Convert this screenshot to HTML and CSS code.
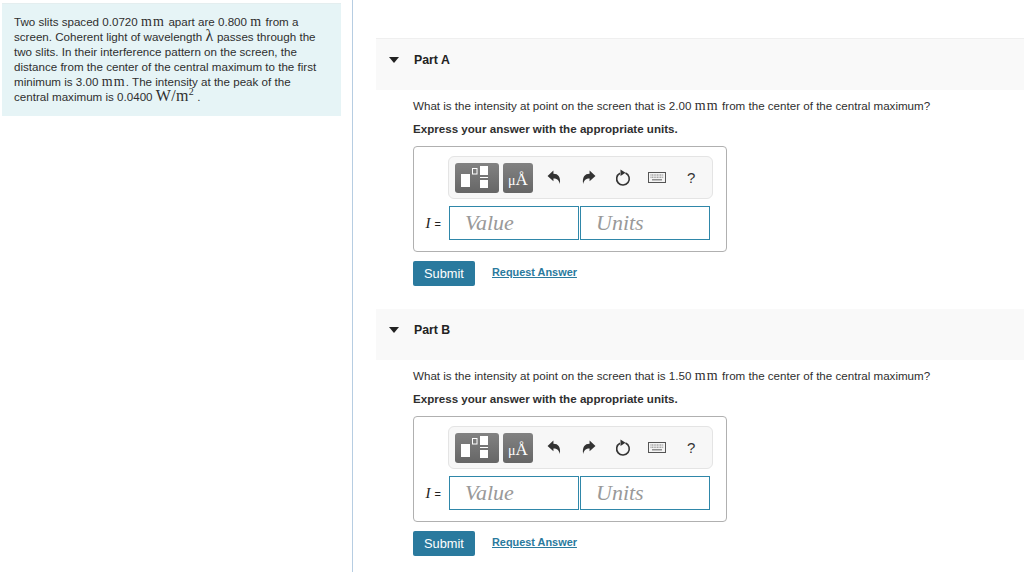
FILE: index.html
```html
<!DOCTYPE html>
<html lang="en">
<head>
<meta charset="utf-8">
<title>Interference</title>
<link rel="stylesheet" href="styles.css">
</head>
<body>
<div class="page">
  <aside class="sidebar">
    <div class="problem">
      <p>Two slits spaced 0.0720 <span class="m">mm</span> apart are 0.800 <span class="m">m</span> from a<br>screen. Coherent light of wavelength <span class="m lam">λ</span> passes through the<br>two slits. In their interference pattern on the screen, the<br>distance from the center of the central maximum to the first<br>minimum is 3.00 <span class="m">mm</span>. The intensity at the peak of the<br>central maximum is 0.0400 <span class="m big">W/m<sup>2</sup></span> .</p>
    </div>
  </aside>
  <main class="main">
    <section class="part">
      <header class="part-head"><span class="caret"></span><h2>Part A</h2></header>
      <div class="part-body">
        <p class="question">What is the intensity at point on the screen that is 2.00 <span class="m">mm</span> from the center of the central maximum?</p>
        <p class="instruction">Express your answer with the appropriate units.</p>
        <div class="answer">
          <div class="toolbar">
            <span class="tbtn tmpl"><svg width="44" height="30" viewBox="0 0 44 30"><rect x="6" y="11" width="9" height="13" fill="#fff"/><rect x="17.500" y="5.500" width="4.500" height="5.500" fill="none" stroke="#fff"/><rect x="25" y="3" width="8" height="9" fill="#fff"/><rect x="25" y="14" width="8" height="1" fill="#fff"/><rect x="25" y="17" width="8" height="8" fill="#fff"/></svg></span>
            <span class="tbtn unit"><span class="mu">μ</span><span class="ang">Å</span></span>
            <span class="ticon i1"><svg width="15" height="15" viewBox="0 0 14 14"><path d="M0.500 5.500 6 0.500V3.500C10.500 3.500 13 6.500 12 13 11 9.500 9.500 8 6 8V10.500Z" fill="#333"/></svg></span>
            <span class="ticon i2"><svg width="15" height="15" viewBox="0 0 14 14"><path d="M13.500 5.500 8 0.500V3.500C3.500 3.500 1 6.500 2 13 3 9.500 4.500 8 8 8V10.500Z" fill="#333"/></svg></span>
            <span class="ticon i3"><svg width="16" height="18" viewBox="0 0 16 18"><path d="M5 4.200A6.300 6.300 0 1 0 10.500 4" fill="none" stroke="#333" stroke-width="1.600"/><path d="M5.500 0.500 10.500 3.800 5.500 7Z" fill="#333"/></svg></span>
            <span class="ticon i4"><svg width="18" height="11" viewBox="0 0 18 11"><rect x="0.500" y="0.500" width="17" height="10" fill="#f4f4f4" stroke="#555"/><path d="M2.500 3H15.500M2.500 5.200H15.500" stroke="#777" stroke-dasharray="1 .6"/><path d="M4 7.800H14" stroke="#777" stroke-width="1.200"/></svg></span>
            <span class="ticon i5">?</span>
          </div>
          <div class="inputs">
            <span class="var"><i>I</i><span class="eq">=</span></span>
            <span class="field">Value</span>
            <span class="field">Units</span>
          </div>
        </div>
        <div class="actions">
          <button class="submit" type="button">Submit</button>
          <a class="request" href="#">Request Answer</a>
        </div>
      </div>
    </section>
    <section class="part">
      <header class="part-head"><span class="caret"></span><h2>Part B</h2></header>
      <div class="part-body">
        <p class="question">What is the intensity at point on the screen that is 1.50 <span class="m">mm</span> from the center of the central maximum?</p>
        <p class="instruction">Express your answer with the appropriate units.</p>
        <div class="answer">
          <div class="toolbar">
            <span class="tbtn tmpl"><svg width="44" height="30" viewBox="0 0 44 30"><rect x="6" y="11" width="9" height="13" fill="#fff"/><rect x="17.500" y="5.500" width="4.500" height="5.500" fill="none" stroke="#fff"/><rect x="25" y="3" width="8" height="9" fill="#fff"/><rect x="25" y="14" width="8" height="1" fill="#fff"/><rect x="25" y="17" width="8" height="8" fill="#fff"/></svg></span>
            <span class="tbtn unit"><span class="mu">μ</span><span class="ang">Å</span></span>
            <span class="ticon i1"><svg width="15" height="15" viewBox="0 0 14 14"><path d="M0.500 5.500 6 0.500V3.500C10.500 3.500 13 6.500 12 13 11 9.500 9.500 8 6 8V10.500Z" fill="#333"/></svg></span>
            <span class="ticon i2"><svg width="15" height="15" viewBox="0 0 14 14"><path d="M13.500 5.500 8 0.500V3.500C3.500 3.500 1 6.500 2 13 3 9.500 4.500 8 8 8V10.500Z" fill="#333"/></svg></span>
            <span class="ticon i3"><svg width="16" height="18" viewBox="0 0 16 18"><path d="M5 4.200A6.300 6.300 0 1 0 10.500 4" fill="none" stroke="#333" stroke-width="1.600"/><path d="M5.500 0.500 10.500 3.800 5.500 7Z" fill="#333"/></svg></span>
            <span class="ticon i4"><svg width="18" height="11" viewBox="0 0 18 11"><rect x="0.500" y="0.500" width="17" height="10" fill="#f4f4f4" stroke="#555"/><path d="M2.500 3H15.500M2.500 5.200H15.500" stroke="#777" stroke-dasharray="1 .6"/><path d="M4 7.800H14" stroke="#777" stroke-width="1.200"/></svg></span>
            <span class="ticon i5">?</span>
          </div>
          <div class="inputs">
            <span class="var"><i>I</i><span class="eq">=</span></span>
            <span class="field">Value</span>
            <span class="field">Units</span>
          </div>
        </div>
        <div class="actions">
          <button class="submit" type="button">Submit</button>
          <a class="request" href="#">Request Answer</a>
        </div>
      </div>
    </section>
  </main>
</div>
</body>
</html>
```
FILE: styles.css
```css
html, body { margin: 0; padding: 0; height: 572px; overflow: hidden; background: #fff; }
body { font-family: "Liberation Sans", Arial, sans-serif; font-size: 11.600px; color: #2f2f2f; }
.page { display: flex; height: 572px; }
.sidebar { width: 352px; border-right: 1px solid #b6cde2; padding: 3px 0 0 0; flex: none; }
.problem { margin-left: 2px; width: 339px; height: 113px; box-sizing: border-box; background: #e6f4f6; padding: 10px 12px 0; border-top: 1px solid #e4eeef; }
.problem p { margin: 0; line-height: 15px; white-space: nowrap; }
.m { font-family: "Liberation Serif", serif; font-size: 14px; letter-spacing: 1.200px; line-height: 10px; }
.lam { font-size: 16px; letter-spacing: 0.500px; }
.big { font-size: 16px; letter-spacing: 0.300px; }
.big sup { font-size: 10px; line-height: 0; vertical-align: 6px; }
.main { flex: 1; padding: 38px 0 0 23px; }
.part { height: 270px; }
.part-head { height: 52px; background: #f9f9f9; border-top: 1px solid #efefef; box-sizing: border-box; display: flex; align-items: center; padding: 0 0 10px 13px; }
.part + .part .part-head { height: 51px; margin-top: 1px; border-top: 0; padding-bottom: 9px; }
.caret { width: 0; height: 0; border-left: 5px solid transparent; border-right: 5px solid transparent; border-top: 6px solid #222; margin-right: 15px; }
.part-head h2 { margin: 0; font-size: 12.300px; font-weight: 700; color: #222; }
.part-body { padding: 0 0 0 37px; }
.question { margin: 9px 0 0; line-height: 14px; height: 14px; }
.instruction { margin: 9px 0 0; font-weight: 700; line-height: 14px; height: 14px; }
.answer { margin-top: 10px; width: 314px; height: 106px; box-sizing: border-box; border: 1px solid #b0b0b0; border-radius: 4px; padding: 9px 0 0 34px; }
.toolbar { width: 265px; height: 43px; box-sizing: border-box; background: #f7f7f7; border: 1px solid #e4e4e4; border-radius: 6px; display: flex; align-items: center; padding-left: 6px; }
.tbtn { height: 30px; box-sizing: border-box; border-radius: 3px; background: linear-gradient(#828282, #666); color: #fff; display: flex; align-items: baseline; justify-content: center; flex: none; }
.tmpl { width: 44px; margin-right: 4px; }
.unit { width: 30px; font-family: "Liberation Serif", serif; line-height: 30px; padding-top: 2px; }
.mu { font-size: 14px; }
.ang { font-size: 17px; }
.ticon { flex: none; display: flex; align-items: center; justify-content: center; height: 30px; }
.i1 { margin-left: 14px; }
.i2 { margin-left: 19px; }
.i3 { margin-left: 19px; }
.i4 { margin-left: 17px; }
.i5 { margin-left: 21px; font-size: 15px; color: #333; }
.inputs { display: flex; align-items: center; margin-top: 7px; margin-left: -34px; }
.var { width: 35px; text-align: right; padding-right: 8px; box-sizing: border-box; font-family: "Liberation Serif", serif; font-size: 15px; color: #222; }
.eq { font-family: "Liberation Sans", sans-serif; font-size: 11px; margin-left: 4px; }
.field { width: 130px; height: 34px; box-sizing: border-box; border: 1px solid #2f87a9; margin-right: 1px; padding-left: 15px; font-family: "Liberation Serif", serif; font-style: italic; font-size: 22px; line-height: 32px; color: #999; background: #fff; }
.actions { display: flex; align-items: center; margin-top: 9px; }
.submit { width: 62px; height: 25px; background: #2a7a9e; color: #fff; border: 0; border-radius: 2px; font-family: inherit; font-size: 12.800px; padding: 0; }
.request { margin-left: 17px; margin-top: -3px; font-weight: 700; font-size: 10.900px; color: #2a7a9e; text-decoration: underline; }
```
